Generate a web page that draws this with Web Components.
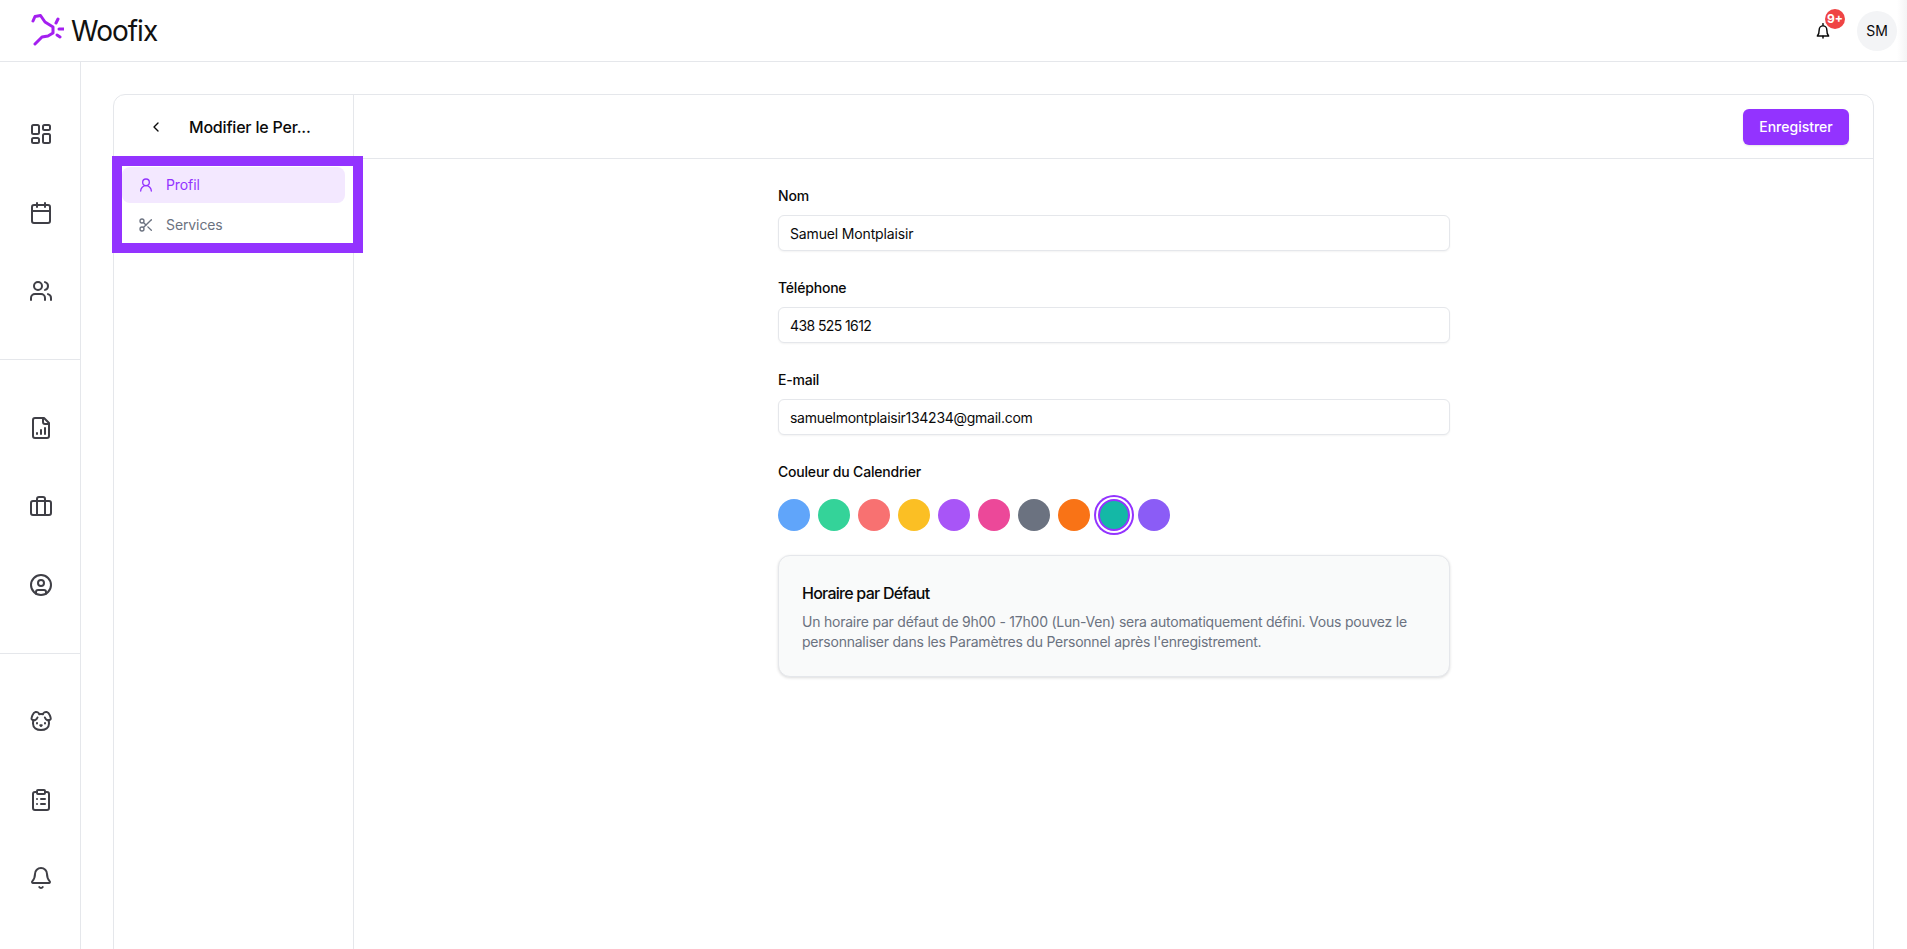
<!DOCTYPE html>
<html lang="fr">
<head>
<meta charset="utf-8">
<title>Woofix</title>
<style>
  html, body { margin: 0; height: 100%; overflow: hidden; background: #fff; }
  body { font-family: Inter, "Liberation Sans", sans-serif; color: #0a0a0a; }
</style>
</head>
<body>
<app-shell>
  <top-bar slot="top"></top-bar>
  <side-rail slot="rail"></side-rail>
  <staff-editor></staff-editor>
</app-shell>

<script>
const ICONS = {
  grid: '<rect x="3" y="3" width="7" height="9" rx="1.5"/><rect x="14" y="3" width="7" height="5" rx="1.5"/><rect x="14" y="12" width="7" height="9" rx="1.5"/><rect x="3" y="16" width="7" height="5" rx="1.5"/>',
  calendar: '<path d="M8 2v4M16 2v4"/><rect x="3" y="4" width="18" height="18" rx="2"/><path d="M3 10h18"/>',
  users: '<path d="M16 21v-2a4 4 0 0 0-4-4H6a4 4 0 0 0-4 4v2"/><circle cx="9" cy="7" r="4"/><path d="M22 21v-2a4 4 0 0 0-3-3.87"/><path d="M16 3.13a4 4 0 0 1 0 7.75"/>',
  report: '<path d="M15 2H6a2 2 0 0 0-2 2v16a2 2 0 0 0 2 2h12a2 2 0 0 0 2-2V7Z"/><path d="M14 2v4a2 2 0 0 0 2 2h4"/><path d="M8 18v-1M12 18v-4M16 18v-6"/>',
  briefcase: '<path d="M16 20V4a2 2 0 0 0-2-2h-4a2 2 0 0 0-2 2v16"/><rect x="2" y="6" width="20" height="14" rx="2"/>',
  account: '<circle cx="12" cy="12" r="10"/><circle cx="12" cy="10" r="3"/><path d="M7 20.66V19a2 2 0 0 1 2-2h6a2 2 0 0 1 2 2v1.66"/>',
  dog: '<path d="M11.25 16.25h1.5L12 17z"/><path d="M16 14v.5M8 14v.5"/><path d="M4.42 11.247A13.152 13.152 0 0 0 4 14.556C4 18.728 7.582 21 12 21s8-2.272 8-6.444a11.702 11.702 0 0 0-.493-3.309"/><path d="M8.5 8.500c-.384 1.050-1.083 2.028-2.344 2.500-1.931.722-3.576-.297-3.656-1-.113-.994 1.177-6.530 4-7 1.923-.321 3.651.845 3.651 2.235A7.497 7.497 0 0 1 14 5.277c0-1.390 1.844-2.598 3.767-2.277 2.823.470 4.113 6.006 4 7-.080.703-1.725 1.722-3.656 1-1.261-.472-1.855-1.450-2.239-2.500"/>',
  clipboard: '<rect x="8" y="2" width="8" height="4" rx="1"/><path d="M16 4h2a2 2 0 0 1 2 2v14a2 2 0 0 1-2 2H6a2 2 0 0 1-2-2V6a2 2 0 0 1 2-2h2"/><path d="M12 11h4M12 16h4M8 11h.01M8 16h.01"/>',
  bell: '<path d="M10.268 21a2 2 0 0 0 3.464 0"/><path d="M3.262 15.326A1 1 0 0 0 4 17h16a1 1 0 0 0 .74-1.673C19.410 13.956 18 12.499 18 8A6 6 0 0 0 6 8c0 4.499-1.411 5.956-2.738 7.326"/>',
  smallbell: '<path d="M12 1v2.500"/><path d="M3.500 19.500c2-2 2.800-4.500 2.800-9.500a5.700 5.700 0 0 1 11.400 0c0 5 .8 7.500 2.800 9.500z"/><path d="M12 20v2.500"/>',
  user: '<circle cx="12" cy="8" r="5"/><path d="M20 21a8 8 0 0 0-16 0"/>',
  scissors: '<circle cx="6" cy="6" r="3"/><path d="M8.120 8.120 12 12"/><path d="M20 4 8.120 15.880"/><circle cx="6" cy="18" r="3"/><path d="M14.800 14.800 20 20"/>',
  back: '<path d="m15 18-6-6 6-6"/>'
};

function icon(name, size, color, width) {
  return `<svg xmlns="http://www.w3.org/2000/svg" width="${size}" height="${size}" viewBox="0 0 24 24" fill="none" stroke="${color}" stroke-width="${width || 2}" stroke-linecap="round" stroke-linejoin="round">${ICONS[name]}</svg>`;
}

class AppShell extends HTMLElement {
  constructor() {
    super();
    this.attachShadow({mode: "open"}).innerHTML = `
      <style>
        :host { display: grid; grid-template-columns: 81px 1fr; grid-template-rows: 62px 1fr; height: 949px; overflow: hidden; }
        .top { grid-column: 1 / -1; }
        main { padding: 32px 33px 0 32px; min-width: 0; }
      </style>
      <div class="top"><slot name="top"></slot></div>
      <slot name="rail"></slot>
      <main><slot></slot></main>`;
  }
}

class TopBar extends HTMLElement {
  constructor() {
    super();
    this.attachShadow({mode: "open"}).innerHTML = `
      <style>
        :host { display: flex; align-items: center; height: 61px; border-bottom: 1px solid #e5e7eb; padding: 0 10px 0 31px; background: linear-gradient(to right, transparent calc(100% - 10px), #f4f4f5); }
        .brand { display: flex; align-items: center; gap: 7px; }
        .brand span { font: 400 28px/1 "Inter", sans-serif; letter-spacing: -1px; color: #111; }
        .right { margin-left: auto; display: flex; align-items: center; gap: 26px; }
        .bell { position: relative; display: flex; }
        .badge { position: absolute; left: 10px; top: -14px; width: 20px; height: 20px; border-radius: 50%; background: #ef4444; color: #fff; font: 700 12px/20px Inter, sans-serif; text-align: center; }
        .avatar { width: 40px; height: 40px; border-radius: 50%; background: #f3f4f6; color: #0a0a0a; font: 400 14px/40px Inter, sans-serif; text-align: center; }
      </style>
      <div class="brand">
        <svg width="33" height="33" viewBox="0 0 33 33" fill="none" stroke="#a41ff0" stroke-width="3" stroke-linecap="round" stroke-linejoin="round">
          <path d="M2 7 L4 2.500 L9.500 1.500 L14 8 L22 13 L22 19 L17 22 L11 23 L4 30"/>
          <path d="M27 5 L25 9 M28 15 L32.500 15 M26 21 L29 23"/>
        </svg>
        <span>Woofix</span>
      </div>
      <div class="right">
        <div class="bell">
          ${icon("smallbell", 16, "#0a0a0a", 2.200)}
          <div class="badge">9+</div>
        </div>
        <div class="avatar">SM</div>
      </div>`;
  }
}

class RailIcon extends HTMLElement {
  constructor() {
    super();
    this.attachShadow({mode: "open"});
  }
  connectedCallback() {
    this.shadowRoot.innerHTML = `
      <style>
        :host { display: flex; align-items: center; justify-content: center; height: 78.500px; }
        svg { display: block; }
      </style>
      ${icon(this.getAttribute("name"), 24, "#3f3f46", 2)}`;
  }
}
customElements.define("rail-icon", RailIcon);

class SideRail extends HTMLElement {
  constructor() {
    super();
    this.attachShadow({mode: "open"}).innerHTML = `
      <style>
        :host { display: block; border-right: 1px solid #e5e7eb; }
        section { padding: 33px 0 0 2px; height: 298px; box-sizing: border-box; border-bottom: 1px solid #e5e7eb; }
        section + section { padding-top: 29px; height: 294px; }
        section:last-child { padding-top: 28px; border-bottom: 0; height: auto; }
      </style>
      <section><rail-icon name="grid"></rail-icon><rail-icon name="calendar"></rail-icon><rail-icon name="users"></rail-icon></section>
      <section><rail-icon name="report"></rail-icon><rail-icon name="briefcase"></rail-icon><rail-icon name="account"></rail-icon></section>
      <section><rail-icon name="dog"></rail-icon><rail-icon name="clipboard"></rail-icon><rail-icon name="bell"></rail-icon></section>`;
  }
}

class TabItem extends HTMLElement {
  constructor() {
    super();
    this.attachShadow({mode: "open"});
  }
  connectedCallback() {
    const active = this.hasAttribute("active");
    const color = active ? "#9333ff" : "#6b7280";
    this.shadowRoot.innerHTML = `
      <style>
        :host { display: flex; align-items: center; gap: 12px; height: 36px; padding: 0 16px; border-radius: 8px; font: 400 14px/20px Inter, sans-serif; letter-spacing: -.1px; color: ${color}; background: ${active ? "#f3e8ff" : "transparent"}; }
        svg { display: block; }
      </style>
      ${icon(this.getAttribute("icon"), 16, color, 2)}
      <slot></slot>`;
  }
}

class TextField extends HTMLElement {
  constructor() {
    super();
    this.attachShadow({mode: "open"});
  }
  connectedCallback() {
    this.shadowRoot.innerHTML = `
      <style>
        :host { display: block; margin-bottom: 27px; }
        label { display: block; font: 500 14px/20px Inter, sans-serif; letter-spacing: -.2px; color: #0a0a0a; margin-bottom: 9px; }
        .box { height: 36px; box-sizing: border-box; border: 1px solid #e5e7eb; border-radius: 6px; box-shadow: 0 1px 2px rgba(0,0,0,.05); padding: 0 11px; font: 400 14px/35px Inter, sans-serif; letter-spacing: var(--value-spacing, -.15px); color: #0a0a0a; background: #fff; }
      </style>
      <label>${this.getAttribute("label")}</label>
      <div class="box"><slot></slot></div>`;
  }
}

class ColorPicker extends HTMLElement {
  constructor() {
    super();
    const colors = ["#60a5fa", "#34d399", "#f87171", "#fbbf24", "#a855f7", "#ec4899", "#6b7280", "#f97316", "#14b8a6", "#8b5cf6"];
    const dots = colors.map(c => `<i class="${c === "#14b8a6" ? "on" : ""}" style="background:${c}"></i>`).join("");
    this.attachShadow({mode: "open"}).innerHTML = `
      <style>
        :host { display: block; }
        label { display: block; font: 500 14px/20px Inter, sans-serif; letter-spacing: -.2px; margin-bottom: 17px; }
        .row { display: flex; gap: 8px; }
        i { display: block; box-sizing: border-box; width: 32px; height: 32px; border-radius: 50%; }
        .on { border: 2px solid #9333ff; box-shadow: 0 0 0 2px #fff, 0 0 0 4px #9333ff; }
      </style>
      <label>Couleur du Calendrier</label>
      <div class="row">${dots}</div>`;
  }
}

class InfoPanel extends HTMLElement {
  constructor() {
    super();
    this.attachShadow({mode: "open"}).innerHTML = `
      <style>
        :host { display: block; box-sizing: border-box; height: 122px; margin-top: 24px; padding: 25px 23px 0; background: #f9fafa; border: 1px solid #e5e7eb; border-radius: 12px; box-shadow: 0 1px 3px rgba(0,0,0,.14); }
        h3 { margin: 0 0 7px; font: 500 16px/24px Inter, sans-serif; letter-spacing: -.75px; color: #0a0a0a; }
        p { margin: 0; font: 400 14px/20px Inter, sans-serif; letter-spacing: -.23px; color: #6b7280; }
      </style>
      <h3><slot name="title"></slot></h3>
      <p><slot></slot></p>`;
  }
}

class StaffEditor extends HTMLElement {
  constructor() {
    super();
    this.attachShadow({mode: "open"}).innerHTML = `
      <style>
        :host { display: grid; grid-template-columns: 240px 1fr; grid-template-rows: 64px 1fr; position: relative; height: 900px; box-sizing: border-box; border: 1px solid #e5e7eb; border-radius: 12px; }
        .title { display: flex; align-items: center; gap: 25px; padding-left: 34px; border-right: 1px solid #e5e7eb; font: 500 16px/24px Inter, sans-serif; letter-spacing: -.2px; color: #0a0a0a; }
        .title svg { flex: none; }
        .title span { white-space: nowrap; }
        .bar { display: flex; align-items: center; justify-content: flex-end; padding-right: 24px; border-bottom: 1px solid #e5e7eb; }
        button { height: 36px; width: 106px; border: 0; border-radius: 6px; background: #9333ff; color: #fff; font: 500 14px/20px Inter, sans-serif; box-shadow: 0 1px 2px rgba(0,0,0,.1); }
        nav { border-right: 1px solid #e5e7eb; padding: 8px; display: flex; flex-direction: column; gap: 4px; }
        .form { padding: 27px 0 0; }
        .form > div { width: 672px; margin-left: 424px; }
        /* annotation drawn over the tabs */
        .mark { position: absolute; left: -2px; top: 61px; width: 251px; height: 97px; box-sizing: border-box; border: 10px solid #9333ff; pointer-events: none; }
      </style>
      <div class="title">${icon("back", 16, "#0a0a0a", 2)}<span>Modifier le Per...</span></div>
      <div class="bar"><button>Enregistrer</button></div>
      <nav>
        <tab-item icon="user" active>Profil</tab-item>
        <tab-item icon="scissors">Services</tab-item>
      </nav>
      <div class="form"><div>
        <text-field label="Nom">Samuel Montplaisir</text-field>
        <text-field label="Téléphone" style="--value-spacing:-.6px">438 525 1612</text-field>
        <text-field label="E-mail" style="--value-spacing:-.27px">samuelmontplaisir134234@gmail.com</text-field>
        <color-picker></color-picker>
        <info-panel>
          <span slot="title">Horaire par Défaut</span>
          Un horaire par défaut de 9h00 - 17h00 (Lun-Ven) sera automatiquement défini. Vous pouvez le personnaliser dans les Paramètres du Personnel après l'enregistrement.
        </info-panel>
      </div></div>
      <div class="mark"></div>`;
  }
}

customElements.define("tab-item", TabItem);
customElements.define("text-field", TextField);
customElements.define("color-picker", ColorPicker);
customElements.define("info-panel", InfoPanel);
customElements.define("staff-editor", StaffEditor);
customElements.define("top-bar", TopBar);
customElements.define("side-rail", SideRail);
customElements.define("app-shell", AppShell);
</script>
</body>
</html>
